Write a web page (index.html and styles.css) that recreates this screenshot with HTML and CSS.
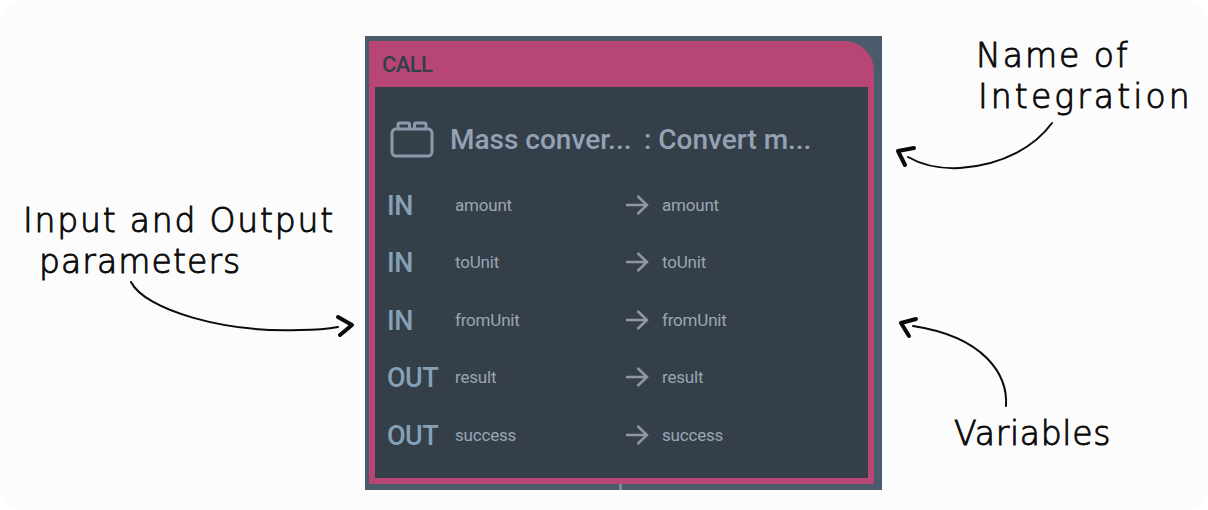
FILE: index.html
```html
<!DOCTYPE html>
<html lang="en">
<head>
<meta charset="utf-8">
<title>Call node</title>
<link rel="stylesheet" href="styles.css">
</head>
<body>
<main class="canvas">
  <section class="frame">
    <div class="node">
      <header class="node-head">CALL</header>
      <div class="node-body">
        <div class="title-row">
          <svg class="block-icon" viewBox="0 0 44 38" aria-hidden="true">
            <path d="M8 9V4.5Q8 3 9.500 3H18Q19.500 3 19.500 4.500V9M24.500 9V4.500Q24.500 3 26 3H34.500Q36 3 36 4.500V9"/>
            <rect x="2" y="9" width="40" height="27" rx="4"/>
          </svg>
          <span class="title-a">Mass conver...</span>
          <span class="title-b">: Convert m...</span>
        </div>
        <div class="rows">
          <div class="row"><span class="dir">IN</span><span class="param">amount</span><svg class="arrow" viewBox="0 0 24 20"><path d="M1 10H22M12.500 1L22 10L12.500 19"/></svg><span class="var">amount</span></div>
          <div class="row"><span class="dir">IN</span><span class="param">toUnit</span><svg class="arrow" viewBox="0 0 24 20"><path d="M1 10H22M12.500 1L22 10L12.500 19"/></svg><span class="var">toUnit</span></div>
          <div class="row"><span class="dir">IN</span><span class="param">fromUnit</span><svg class="arrow" viewBox="0 0 24 20"><path d="M1 10H22M12.500 1L22 10L12.500 19"/></svg><span class="var">fromUnit</span></div>
          <div class="row"><span class="dir">OUT</span><span class="param">result</span><svg class="arrow" viewBox="0 0 24 20"><path d="M1 10H22M12.500 1L22 10L12.500 19"/></svg><span class="var">result</span></div>
          <div class="row"><span class="dir">OUT</span><span class="param">success</span><svg class="arrow" viewBox="0 0 24 20"><path d="M1 10H22M12.500 1L22 10L12.500 19"/></svg><span class="var">success</span></div>
        </div>
      </div>
    </div>
    <i class="stem"></i>
  </section>

  <svg class="ink" viewBox="0 0 1208 510" aria-hidden="true">
    <path class="thin" d="M1052 123C1036 145 1005 165 960 168C938 169 920 164 908 157"/>
    <path class="thick" d="M914 148L898 151L905 165"/>
    <path class="thin" d="M1006 406C1008 375 985 337 913 326"/>
    <path class="thick" d="M916 319L901 323L909 336"/>
    <path class="thin" d="M131 282C145 310 225 333 300 330C315 330 328 329 338 327"/>
    <path class="thick" d="M338 317L352 325L340 335"/>
  </svg>

  <p class="note note-int">Name of<br><span class="nudge">Integration</span></p>
  <p class="note note-params">Input and Output<br><span class="indent">parameters</span></p>
  <p class="note note-vars">Variables</p>
</main>
</body>
</html>
```

FILE: styles.css
```css
* { box-sizing: border-box; }
html, body { margin: 0; background: #fff; }
.canvas {
  position: relative;
  width: 1208px;
  height: 510px;
  background: #fcfcfc;
  border-radius: 24px;
  overflow: hidden;
  display: flex;
  justify-content: flex-start;
  padding: 36px 0 0 365px;
  font-family: "Roboto", sans-serif;
}
.frame {
  position: relative;
  width: 517px;
  height: 454px;
  background: #4a5c6b;
  padding: 5px 8px 6px 4px;
}
.stem {
  position: absolute;
  left: 254px;
  top: 448px;
  width: 3px;
  height: 6px;
  background: #7f8a96;
}
.node {
  height: 100%;
  background: #b74674;
  border-radius: 0 30px 0 0;
  padding: 0 6px 6px;
  display: flex;
  flex-direction: column;
}
.node-head {
  height: 46px;
  padding: 0 0 0 7px;
  display: flex;
  align-items: center;
  font-size: 22px;
  font-weight: 500;
  letter-spacing: -0.6px;
  color: #33404c;
}
.node-body {
  flex: 1;
  background: #343f4a;
  padding: 33px 0 0 12px;
}
.title-row {
  display: flex;
  align-items: center;
  height: 38px;
  color: #94a2b3;
  font-size: 28px;
  font-weight: 500;
  letter-spacing: 0;
  white-space: nowrap;
}
.block-icon {
  width: 44px;
  height: 38px;
  margin: 0 16px 0 3px;
  fill: none;
  stroke: #8a99aa;
  stroke-width: 3;
}
.title-a { width: 194px; }
.rows {
  display: flex;
  flex-direction: column;
  margin-top: 18px;
}
.row {
  display: flex;
  align-items: center;
  height: 57.5px;
}
.dir {
  width: 68px;
  margin-top: 2px;
  color: #86a0b6;
  font-size: 27px;
  font-weight: 500;
  letter-spacing: -0.5px;
}
.param {
  width: 170px;
  color: #9aa6b2;
  font-size: 17px;
  letter-spacing: -0.2px;
}
.var {
  color: #9aa6b2;
  font-size: 17px;
  letter-spacing: -0.2px;
}
.arrow {
  width: 24px;
  height: 20px;
  margin-right: 13px;
  fill: none;
  stroke: #8f97a3;
  stroke-width: 2.5;
}
.ink {
  position: absolute;
  inset: 0;
  width: 1208px;
  height: 510px;
  fill: none;
  stroke: #0a0a0a;
  stroke-linecap: round;
  stroke-linejoin: round;
}
.thin { stroke-width: 2; }
.thick { stroke-width: 4; }
.note {
  position: absolute;
  margin: 0;
  color: #0a0a0a;
  font-family: "DejaVu Sans", sans-serif;
  font-weight: 200;
  -webkit-text-stroke: 0.9px #0a0a0a;
  font-size: 33px;
  line-height: 41px;
  white-space: nowrap;
}
.note-int { left: 976px; top: 35px; letter-spacing: 2px; }
.nudge { margin-left: 2px; letter-spacing: 3.1px; }
.note-params { left: 23px; top: 200px; letter-spacing: 1.8px; }
.indent { margin-left: 16px; letter-spacing: 1.1px; }
.note-vars { left: 954px; top: 413px; letter-spacing: 0.7px; }
```
